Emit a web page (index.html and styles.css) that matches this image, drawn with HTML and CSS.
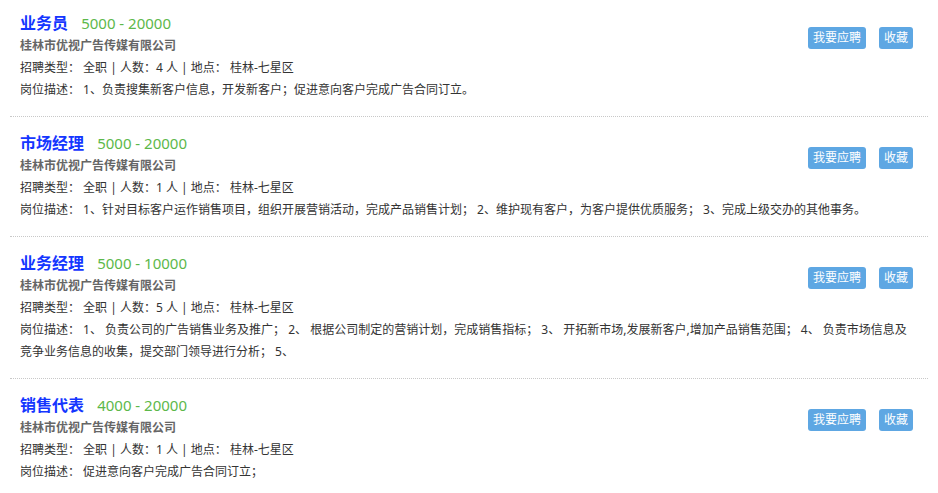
FILE: index.html
```html
<!DOCTYPE html>
<html lang="zh-CN">
<head>
  <meta charset="UTF-8">
  <meta name="viewport" content="width=device-width, initial-scale=1">
  <title>职位列表</title>
  <link rel="stylesheet" href="styles.css">
</head>
<body>

<div class="job-list">

  <div class="job-item">
    <div class="job-actions">
      <a class="btn" href="#">我要应聘</a>
      <a class="btn" href="#">收藏</a>
    </div>
    <div class="job-title">
      <a href="#" class="job-name">业务员</a>
      <span class="salary">5000 - 20000</span>
    </div>
    <div class="company">桂林市优视广告传媒有限公司</div>
    <div class="job-meta">招聘类型： 全职 | 人数：4 人 | 地点： 桂林-七星区</div>
    <div class="job-desc">岗位描述： 1、负责搜集新客户信息，开发新客户；促进意向客户完成广告合同订立。</div>
  </div>

  <div class="job-item">
    <div class="job-actions">
      <a class="btn" href="#">我要应聘</a>
      <a class="btn" href="#">收藏</a>
    </div>
    <div class="job-title">
      <a href="#" class="job-name">市场经理</a>
      <span class="salary">5000 - 20000</span>
    </div>
    <div class="company">桂林市优视广告传媒有限公司</div>
    <div class="job-meta">招聘类型： 全职 | 人数：1 人 | 地点： 桂林-七星区</div>
    <div class="job-desc">岗位描述： 1、针对目标客户运作销售项目，组织开展营销活动，完成产品销售计划； 2、维护现有客户，为客户提供优质服务； 3、完成上级交办的其他事务。</div>
  </div>

  <div class="job-item">
    <div class="job-actions">
      <a class="btn" href="#">我要应聘</a>
      <a class="btn" href="#">收藏</a>
    </div>
    <div class="job-title">
      <a href="#" class="job-name">业务经理</a>
      <span class="salary">5000 - 10000</span>
    </div>
    <div class="company">桂林市优视广告传媒有限公司</div>
    <div class="job-meta">招聘类型： 全职 | 人数：5 人 | 地点： 桂林-七星区</div>
    <div class="job-desc">岗位描述： 1、 负责公司的广告销售业务及推广； 2、 根据公司制定的营销计划，完成销售指标； 3、 开拓新市场,发展新客户,增加产品销售范围； 4、 负责市场信息及竞争业务信息的收集，提交部门领导进行分析； 5、</div>
  </div>

  <div class="job-item">
    <div class="job-actions">
      <a class="btn" href="#">我要应聘</a>
      <a class="btn" href="#">收藏</a>
    </div>
    <div class="job-title">
      <a href="#" class="job-name">销售代表</a>
      <span class="salary">4000 - 20000</span>
    </div>
    <div class="company">桂林市优视广告传媒有限公司</div>
    <div class="job-meta">招聘类型： 全职 | 人数：1 人 | 地点： 桂林-七星区</div>
    <div class="job-desc">岗位描述： 促进意向客户完成广告合同订立；</div>
  </div>

</div>

</body>
</html>
```

FILE: styles.css
```css
*, *::before, *::after {
  box-sizing: border-box;
}

body {
  margin: 0;
  background: #ffffff;
  font-family: "Noto Sans", "Noto Sans CJK SC", sans-serif;
  font-size: 12px;
  color: #333;
}

a {
  text-decoration: none;
}

.job-list {
  margin: 0 10px;
}

.job-item {
  padding: 14px 10px 15px;
  border-bottom: 1px dotted #c8c8c8;
}

/* list is scrolled a little, first row sits higher */
.job-item:first-child {
  padding-top: 11px;
}

.job-actions {
  float: right;
  display: flex;
  gap: 13px;
  margin-top: 16px;
  margin-right: 5px;
}

.btn {
  display: block;
  height: 22px;
  line-height: 22px;
  padding: 0 5px;
  border-radius: 3px;
  background: #5ea7e3;
  color: #ffffff;
  font-size: 12px;
}

.job-title {
  height: 24px;
  line-height: 24px;
}

.job-name {
  font-size: 16px;
  font-weight: bold;
  color: #1436ff;
}

.salary {
  margin-left: 10px;
  font-size: 15px;
  color: #5cb84a;
}

.company {
  line-height: 22px;
  font-size: 12px;
  font-weight: bold;
  color: #666;
}

.job-meta,
.job-desc {
  line-height: 22px;
}
```
